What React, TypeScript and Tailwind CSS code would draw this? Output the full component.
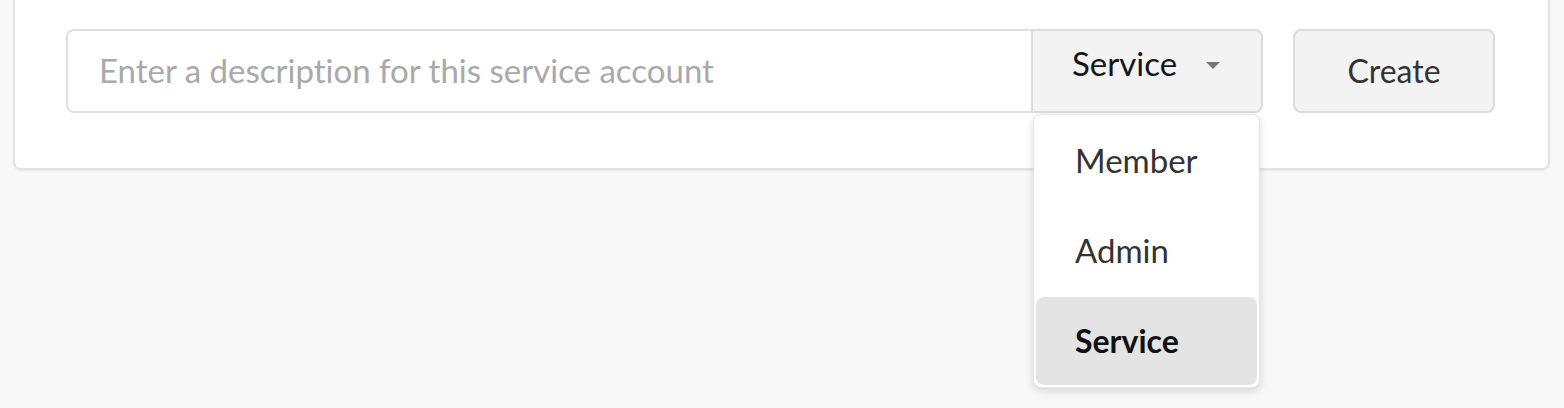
import { useState } from "react";

const roles = ["Member", "Admin", "Service"];

export default function App() {
  const [role, setRole] = useState("Service");

  return (
    <div
      className="min-h-screen w-full bg-[#f8f8f8] pl-[13px] pr-[14px] [font-variant-ligatures:none]"
      style={{ fontFamily: "Lato, 'Open Sans', 'Noto Sans', sans-serif" }}
    >
      <div className="rounded-b-[8px] border-x-2 border-b-2 border-[#e3e3e3] bg-white pl-[51px] pr-[53px] pt-[29px] pb-[55px] shadow-[0_1px_2px_rgba(0,0,0,0.06)]">
        <div className="flex items-stretch">
          <div className="flex h-[84px] flex-1 items-center rounded-l-[8px] border-2 border-r-0 border-[#e0e0e0] bg-white px-[31px]">
            <input
              className="w-full bg-transparent text-[33px] text-[#333] outline-none placeholder:text-[#a9a9a9]"
              placeholder="Enter a description for this service account"
            />
          </div>
          <div className="relative w-[232px]">
            <button
              type="button"
              className="flex h-[84px] w-full items-center rounded-r-[8px] border-2 border-[#dcdcdc] bg-[#f3f3f3] pl-[39px] pb-[14px] text-[33px] text-[#151515]"
            >
              <span>{role}</span>
              <span className="ml-[29px] mt-[2px] h-0 w-0 border-x-[7px] border-t-[7px] border-x-transparent border-t-[#777]" />
            </button>
            <div className="absolute left-[2px] top-[85px] z-10 w-[227px] rounded-[8px] border border-[#e6e6e6] bg-white p-[2px] shadow-[0_3px_8px_rgba(0,0,0,0.14)]">
              {roles.map((r) => (
                <button
                  key={r}
                  type="button"
                  onClick={() => setRole(r)}
                  className={
                    r === role
                      ? "flex h-[88px] w-full items-center rounded-[8px] bg-[#e4e4e4] pl-[39px] text-[32px] font-bold text-[#111]"
                      : "flex h-[90px] w-full items-center pl-[39px] pb-[2px] text-[33px] text-[#333]"
                  }
                >
                  {r}
                </button>
              ))}
            </div>
          </div>
          <button
            type="button"
            className="ml-[30px] h-[84px] w-[202px] rounded-[8px] border-2 border-[#dcdcdc] bg-[#f3f3f3] text-[32px] text-[#333]"
          >
            Create
          </button>
        </div>
      </div>
    </div>
  );
}
